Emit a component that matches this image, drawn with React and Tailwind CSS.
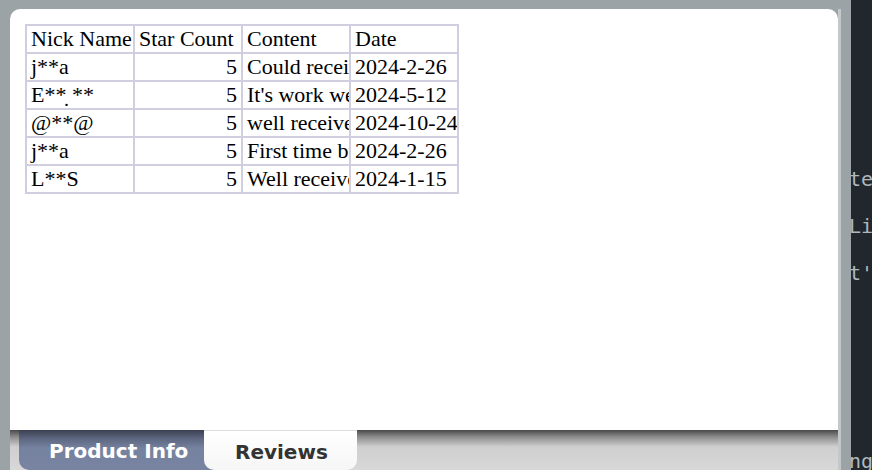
import React from 'react';

// 评论数据
const reviews = [
  { nick: 'j**a', stars: 5, content: 'Could receive it quickly', date: '2024-2-26' },
  { nick: 'E**̣ **', stars: 5, content: "It's work well", date: '2024-5-12' },
  { nick: '@**@', stars: 5, content: 'well received, thanks', date: '2024-10-24' },
  { nick: 'j**a', stars: 5, content: 'First time buying here', date: '2024-2-26' },
  { nick: 'L**S', stars: 5, content: 'Well received, good', date: '2024-1-15' },
];

const cell = 'border border-[#d0cfe0] px-1 py-0 leading-[26px] overflow-hidden whitespace-nowrap text-left font-normal';

function ReviewTable() {
  return (
    <table className="w-[434px] table-fixed border-separate border-spacing-0 border border-[#d0cfe0] font-['Liberation_Serif',serif] text-[22px] text-black">
      <thead>
        <tr>
          <th className={cell}>Nick Name</th>
          <th className={cell}>Star Count</th>
          <th className={cell}>Content</th>
          <th className={cell}>Date</th>
        </tr>
      </thead>
      <tbody>
        {reviews.map((r, i) => (
          <tr key={i}>
            <td className={cell}>{r.nick}</td>
            <td className={`${cell} !text-right`}>{r.stars}</td>
            <td className={cell}>{r.content}</td>
            <td className={cell}>{r.date}</td>
          </tr>
        ))}
      </tbody>
    </table>
  );
}

function TabBar() {
  return (
    <div className="flex h-[40px] bg-[linear-gradient(to_bottom,#4a4a4a_0%,#8e8e8e_18%,#cfcfcf_42%,#d8d8d8_100%)] pl-[9px] font-['DejaVu_Sans',sans-serif] text-[20px] font-bold">
      <div className="flex w-[195px] items-center rounded-bl-[10px] bg-[linear-gradient(to_bottom,#3a4050_0%,#5d6780_22%,#7582a0_45%,#7884a1_100%)] pl-[30px] pt-[2px] text-white">
        Product Info
      </div>
      <div className="relative z-10 -ml-[10px] flex w-[153px] items-center rounded-b-[10px] border-t border-[#dcdcdc] bg-[linear-gradient(to_bottom,#ffffff,#f6f6f6)] pl-[31px] pt-[2px] text-[#333333]">
        Reviews
      </div>
    </div>
  );
}

function EditorStrip() {
  const lines = ['te', 'Li', "t'", '', '', '', 'ng'];
  return (
    <div className="ml-[10px] w-[21px] overflow-hidden bg-[#21272c] pt-[156px]">
      <div className="-ml-[2px] font-['DejaVu_Sans_Mono',monospace] text-[20px] leading-[47px] text-[#b0b8be] whitespace-pre">
        {lines.map((l, i) => (
          <div key={i} className="h-[47px]">{l}</div>
        ))}
      </div>
    </div>
  );
}

export default function App() {
  return (
    <div className="flex h-[470px] w-[872px] overflow-hidden bg-[#9ba3a6]">
      <div className="ml-[10px] mt-[9px] flex w-[831px] flex-col border-r-[3px] border-[#c4c8c9]">
        <div className="flex-1 rounded-tr-[10px] rounded-tl-[10px] bg-white pl-[15px] pt-[15px]">
          <ReviewTable />
        </div>
        <TabBar />
      </div>
      <EditorStrip />
    </div>
  );
}
